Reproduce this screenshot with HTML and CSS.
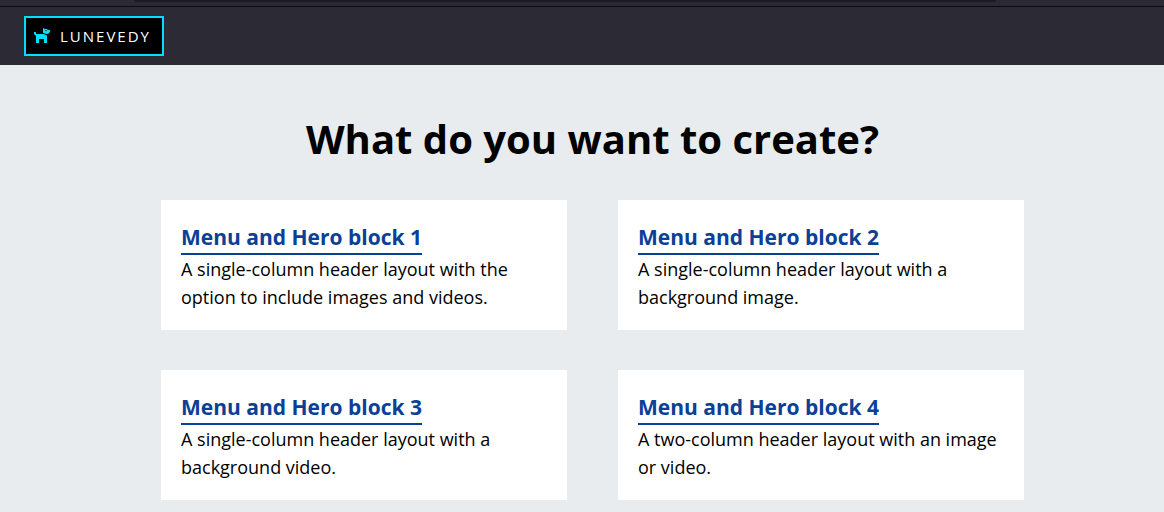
FILE: index.html
```html
<!DOCTYPE html>
<html lang="en">
<head>
<meta charset="utf-8">
<title>Lunevedy</title>
<meta name="viewport" content="width=device-width, initial-scale=1">
<link rel="stylesheet" href="styles.css">
</head>
<body>
<div class="topbar"><div class="topbar-field"></div></div>
<header class="header">
  <a class="brand" href="#">
    <svg class="brand-icon" viewBox="0 0 16 16" aria-hidden="true">
      <path d="M0 4h2v2h8l3 1.500V15h-3v-4H5v4H2V8L0 6z"/>
      <path d="M9 0l2 1h2l1 1h2v2l-2 2h-2l-3-1z"/>
      <path class="brand-collar" d="M9 5.500l4 1M11 2.500h2"/>
    </svg>
    <span>LUNEVEDY</span>
  </a>
</header>
<main class="main">
  <h1 class="title">What do you want to create?</h1>
  <div class="cards">
    <article class="card">
      <h2 class="card-title"><a class="card-link" href="#">Menu and Hero block 1</a></h2>
      <p class="card-text">A single-column header layout with the option to include images and videos.</p>
    </article>
    <article class="card">
      <h2 class="card-title"><a class="card-link" href="#">Menu and Hero block 2</a></h2>
      <p class="card-text">A single-column header layout with a background image.</p>
    </article>
    <article class="card">
      <h2 class="card-title"><a class="card-link" href="#">Menu and Hero block 3</a></h2>
      <p class="card-text">A single-column header layout with a background video.</p>
    </article>
    <article class="card">
      <h2 class="card-title"><a class="card-link" href="#">Menu and Hero block 4</a></h2>
      <p class="card-text">A two-column header layout with an image or video.</p>
    </article>
  </div>
</main>
</body>
</html>
```
FILE: styles.css
```css
* { box-sizing: border-box; }
body {
  margin: 0;
  background: #e8ecef;
  color: #000;
  font-family: "Segoe UI", "Open Sans", "Noto Sans", sans-serif;
  font-size: 18px;
  line-height: 28px;
}
.topbar {
  height: 7px;
  padding: 0 168px 0 134px;
  background: #2b2a33;
  border-bottom: 1px solid #0c0c0d;
}
.topbar-field {
  height: 2px;
  background: #1c1b22;
  border-radius: 0 0 2px 2px;
}
.header {
  display: flex;
  padding: 9px 24px;
  background: #2c2a34;
}
.brand {
  display: flex;
  align-items: center;
  gap: 10px;
  height: 40px;
  padding: 0 11px 0 8px;
  border: 2px solid #00ddff;
  background: #000;
  color: #fff;
  font-size: 15px;
  letter-spacing: 2px;
  text-decoration: none;
}
.brand-icon {
  width: 16px;
  height: 16px;
  fill: #00ddff;
}
.brand-collar {
  fill: none;
  stroke: #000;
  stroke-width: 0.5;
}
.main {
  display: flex;
  flex-direction: column;
  gap: 32px;
  max-width: 884px;
  margin: 0 auto;
  padding: 44px 0 12px 21px;
}
.title {
  margin: 0;
  font-size: 40px;
  line-height: 59px;
  font-weight: 700;
  text-align: center;
}
.cards {
  display: grid;
  grid-template-columns: repeat(auto-fit, minmax(320px, 1fr));
  gap: 40px 51px;
}
.card {
  padding: 23px 20px 19px;
  background: #fff;
}
.card-title {
  margin: 0;
  font-size: 21px;
  line-height: 28px;
  font-weight: 700;
}
.card-link {
  display: inline-block;
  padding-bottom: 2px;
  border-bottom: 2px solid #0a4095;
  color: #0a4095;
  text-decoration: none;
}
.card-text { margin: 0; }
```
